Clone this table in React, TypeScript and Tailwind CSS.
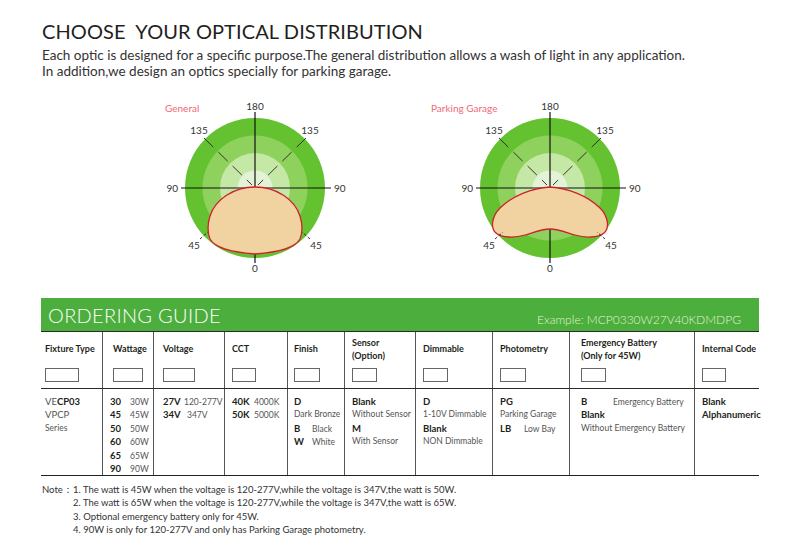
import React from 'react';

const dash = '13 7';

function PolarChart({ label, shape }: { label: string; shape: string }) {
  return (
    <svg width="240" height="180" viewBox="0 0 240 180" className="block">
      <text x={label === 'General' ? 30 : 1} y="15" fontSize="10" fill="#ef6a78">{label}</text>
      <g transform="translate(120,91)">
        <circle r="70" fill="#64c230" />
        <circle r="52.5" fill="#8ed25d" />
        <circle r="35" fill="#c6e8a7" />
        <circle r="17.5" fill="#e3f3d6" />
        {/* angle marks */}
        <line x1="-51" y1="-50" x2="-3" y2="-3" stroke="#222" strokeWidth="0.9" strokeDasharray={dash} />
        <line x1="51" y1="-50" x2="3" y2="-3" stroke="#222" strokeWidth="0.9" strokeDasharray={dash} />
        <line x1="-74" y1="0" x2="76" y2="0" stroke="#111" strokeWidth="1.2" />
        <line x1="0" y1="-76" x2="0" y2="75" stroke="#111" strokeWidth="1.2" />
        <path d={shape} fill="#f0d3a1" stroke="#d0202e" strokeWidth="1.3" />
        <line x1="-55" y1="51" x2="-47" y2="44" stroke="#222" strokeWidth="0.9" strokeDasharray="3 2" />
        <line x1="55" y1="51" x2="47" y2="44" stroke="#222" strokeWidth="0.9" strokeDasharray="3 2" />
        <g fontSize="10" fill="#333">
          <text x="0" y="-78" textAnchor="middle">180</text>
          <text x="-56" y="-54" textAnchor="middle">135</text>
          <text x="55" y="-54" textAnchor="middle">135</text>
          <text x="-77" y="3.5" textAnchor="end">90</text>
          <text x="79" y="3.5">90</text>
          <text x="-61" y="61" textAnchor="middle">45</text>
          <text x="61" y="61" textAnchor="middle">45</text>
          <text x="0" y="84" textAnchor="middle">0</text>
        </g>
      </g>
    </svg>
  );
}

const generalShape =
  'M0,-1 C-22,-1 -40,12 -45,28 C-48,38 -47,46 -45,51 C-40,60 -25,64 0,66 C25,64 40,60 45,51 C47,46 48,38 45,28 C40,12 22,-1 0,-1 Z';
const garageShape =
  'M0,-1 C-18,0 -38,8 -50,20 C-58,28 -60,40 -54,45 C-48,50 -35,50 -25,47 C-15,44 -8,41 0,41 C8,41 15,44 25,47 C35,50 48,50 54,45 C60,40 58,28 50,20 C38,8 18,0 0,-1 Z';

const columns = [
  { w: 'w-[61px]', pad: 'pl-[4px]', box: 'w-[34px]', title: ['Fixture Type'] },
  { w: 'w-[51px]', pad: 'pl-[10px]', box: 'w-[30px]', title: ['Wattage'] },
  { w: 'w-[71px]', pad: 'pl-[9px]', box: 'w-[32px]', title: ['Voltage'] },
  { w: 'w-[63px]', pad: 'pl-[7px]', box: 'w-[24px]', title: ['CCT'] },
  { w: 'w-[57px]', pad: 'pl-[6px]', box: 'w-[26px]', title: ['Finish'] },
  { w: 'w-[71px]', pad: 'pl-[7px]', box: 'w-[25px]', title: ['Sensor', '(Option)'] },
  { w: 'w-[77px]', pad: 'pl-[7px]', box: 'w-[25px]', title: ['Dimmable'] },
  { w: 'w-[77px]', pad: 'pl-[7px]', box: 'w-[26px]', title: ['Photometry'] },
  { w: 'w-[125px]', pad: 'pl-[11px]', box: 'w-[25px]', title: ['Emergency Battery', '(Only for 45W)'] },
  { w: 'w-[65px]', pad: 'pl-[7px]', box: 'w-[24px]', title: ['Internal Code'] },
];

const B = ({ children, className = '' }: { children: React.ReactNode; className?: string }) => (
  <span className={`font-bold text-[9.5px] text-[#231f20] ${className}`}>{children}</span>
);
const L = ({ children, className = '' }: { children: React.ReactNode; className?: string }) => (
  <span className={`text-[8.5px] text-[#555] ${className}`}>{children}</span>
);
const Row = ({ children }: { children: React.ReactNode }) => (
  <div className="h-[13.4px] flex items-baseline">{children}</div>
);

function DataCells() {
  const watts = ['30', '45', '50', '60', '65', '90'];
  return [
    <div key="fixture">
      <Row><L className="text-[9.5px] text-[#333]">VE</L><B>CP03</B></Row>
      <Row><L className="text-[9.5px] text-[#333]">VPCP</L></Row>
      <Row><L>Series</L></Row>
    </div>,
    <div key="watt" className="-ml-[3px]">
      {watts.map((w) => (
        <Row key={w}>
          <B className="w-[20px]">{w}</B>
          <L>{w}W</L>
        </Row>
      ))}
    </div>,
    <div key="volt">
      <Row><B className="w-[21px]">27V</B><L>120-277V</L></Row>
      <Row><B className="w-[24px]">34V</B><L>347V</L></Row>
    </div>,
    <div key="cct">
      <Row><B className="w-[22px]">40K</B><L>4000K</L></Row>
      <Row><B className="w-[22px]">50K</B><L>5000K</L></Row>
    </div>,
    <div key="finish">
      <Row><B>D</B></Row>
      <Row><L>Dark Bronze</L></Row>
      <Row><B className="w-[18px]">B</B><L>Black</L></Row>
      <Row><B className="w-[18px]">W</B><L>White</L></Row>
    </div>,
    <div key="sensor">
      <Row><B>Blank</B></Row>
      <Row><L>Without Sensor</L></Row>
      <Row><B>M</B></Row>
      <Row><L>With Sensor</L></Row>
    </div>,
    <div key="dim">
      <Row><B>D</B></Row>
      <Row><L>1-10V Dimmable</L></Row>
      <Row><B>Blank</B></Row>
      <Row><L>NON Dimmable</L></Row>
    </div>,
    <div key="photo">
      <Row><B>PG</B></Row>
      <Row><L>Parking Garage</L></Row>
      <Row><B className="w-[24px]">LB</B><L>Low Bay</L></Row>
    </div>,
    <div key="emerg">
      <Row><B className="w-[32px]">B</B><L>Emergency Battery</L></Row>
      <Row><B>Blank</B></Row>
      <Row><L>Without Emergency Battery</L></Row>
    </div>,
    <div key="internal">
      <Row><B>Blank</B></Row>
      <Row><B>Alphanumeric</B></Row>
    </div>,
  ];
}

export default function App() {
  const cells = DataCells();
  return (
    <div className="w-[802px] h-[549px] bg-white overflow-hidden font-['Lato','Open_Sans',sans-serif] text-[#231f20]">
      {/* Heading */}
      <div className="pl-[42px] pt-[18px]">
        <h1 className="text-[20px] leading-[26px] font-normal tracking-[0.1px] text-[#231f20]">CHOOSE&nbsp; YOUR OPTICAL DISTRIBUTION</h1>
        <p className="mt-[3px] text-[13.5px] leading-[16px] text-[#333]">
          Each optic is designed for a specific purpose.The general distribution allows a wash of light in any application.
          <br />
          In addition,we design an optics specially for parking garage.
        </p>
      </div>

      {/* Charts */}
      <div className="flex pl-[135px] gap-[55px] mt-[18px]">
        <PolarChart label="General" shape={generalShape} />
        <PolarChart label="Parking Garage" shape={garageShape} />
      </div>

      {/* Ordering guide */}
      <div className="ml-[41px] w-[718px] mt-[21px]">
        <div className="h-[34px] bg-[#4cae3c] border-b border-[#2a2a2a] flex items-center justify-between pl-[7px] pr-[18px]">
          <span className="text-white text-[20px] font-light tracking-[0.3px] leading-none pt-[1px]">ORDERING GUIDE</span>
          <span className="text-[#e2f2d6] text-[12px] font-light mt-[10px]">Example: MCP0330W27V40KDMDPG</span>
        </div>
        <div className="flex border-b border-[#2a2a2a] h-[57px]">
          {columns.map((c, i) => (
            <div key={i} className={`${c.w} ${c.pad} h-full ${i ? 'border-l border-[#555]' : ''}`}>
              <div className="h-[30px] mt-[2px] flex flex-col justify-center font-bold text-[9px] leading-[13.5px] text-[#231f20]">
                {c.title.map((t) => (
                  <div key={t}>{t}</div>
                ))}
              </div>
              <div className={`${c.box} h-[14px] mt-[4px] border border-[#666]`} />
            </div>
          ))}
        </div>
        <div className="flex border-b-[1.5px] border-[#222] h-[87px]">
          {columns.map((c, i) => (
            <div key={i} className={`${c.w} ${c.pad} h-full pt-[6px] whitespace-nowrap ${i ? 'border-l border-[#555]' : ''}`}>
              {cells[i]}
            </div>
          ))}
        </div>
      </div>

      {/* Notes */}
      <div className="ml-[42px] mt-[7px] flex text-[9.5px] leading-[13.3px] text-[#333]">
        <div className="w-[31px]">Note：</div>
        <div>
          <div>1. The watt is 45W when the voltage is 120-277V,while the voltage is 347V,the watt is 50W.</div>
          <div>2. The watt is 65W when the voltage is 120-277V,while the voltage is 347V,the watt is 65W.</div>
          <div>3. Optional emergency battery only for 45W.</div>
          <div>4. 90W is only for 120-277V and only has Parking Garage photometry.</div>
        </div>
      </div>
    </div>
  );
}
